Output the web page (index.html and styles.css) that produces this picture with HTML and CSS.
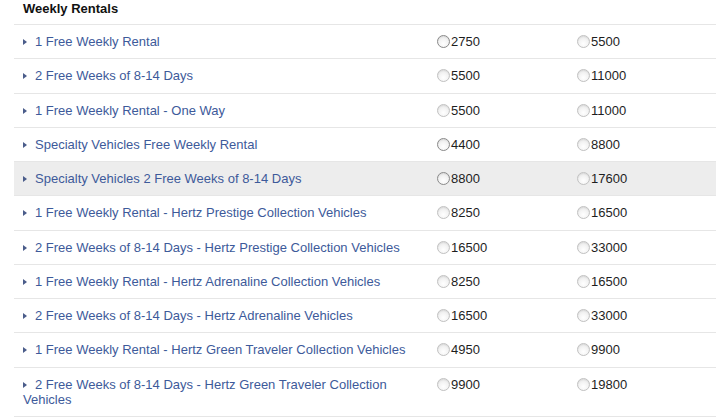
FILE: index.html
```html
<!DOCTYPE html>
<html>
<head>
<meta charset="utf-8">
<link rel="stylesheet" href="styles.css">
</head>
<body>
<div class="panel">
  <h2 class="title">Weekly Rentals</h2>
  <table class="rentals">
    <colgroup><col class="c-name"><col class="c-a"><col class="c-b"></colgroup>
    <tbody>
      <tr><td class="name"><span class="tri"></span>1 Free Weekly Rental</td><td><label class="opt"><span class="radio dark"></span>2750</label></td><td><label class="opt"><span class="radio"></span>5500</label></td></tr>
      <tr><td class="name"><span class="tri"></span>2 Free Weeks of 8-14 Days</td><td><label class="opt"><span class="radio"></span>5500</label></td><td><label class="opt"><span class="radio"></span>11000</label></td></tr>
      <tr><td class="name"><span class="tri"></span>1 Free Weekly Rental - One Way</td><td><label class="opt"><span class="radio"></span>5500</label></td><td><label class="opt"><span class="radio"></span>11000</label></td></tr>
      <tr><td class="name"><span class="tri"></span>Specialty Vehicles Free Weekly Rental</td><td><label class="opt"><span class="radio dark"></span>4400</label></td><td><label class="opt"><span class="radio"></span>8800</label></td></tr>
      <tr class="hl"><td class="name"><span class="tri"></span>Specialty Vehicles 2 Free Weeks of 8-14 Days</td><td><label class="opt"><span class="radio dark"></span>8800</label></td><td><label class="opt"><span class="radio"></span>17600</label></td></tr>
      <tr><td class="name"><span class="tri"></span>1 Free Weekly Rental - Hertz Prestige Collection Vehicles</td><td><label class="opt"><span class="radio"></span>8250</label></td><td><label class="opt"><span class="radio"></span>16500</label></td></tr>
      <tr><td class="name"><span class="tri"></span>2 Free Weeks of 8-14 Days - Hertz Prestige Collection Vehicles</td><td><label class="opt"><span class="radio"></span>16500</label></td><td><label class="opt"><span class="radio"></span>33000</label></td></tr>
      <tr><td class="name"><span class="tri"></span>1 Free Weekly Rental - Hertz Adrenaline Collection Vehicles</td><td><label class="opt"><span class="radio"></span>8250</label></td><td><label class="opt"><span class="radio"></span>16500</label></td></tr>
      <tr><td class="name"><span class="tri"></span>2 Free Weeks of 8-14 Days - Hertz Adrenaline Vehicles</td><td><label class="opt"><span class="radio"></span>16500</label></td><td><label class="opt"><span class="radio"></span>33000</label></td></tr>
      <tr><td class="name"><span class="tri"></span>1 Free Weekly Rental - Hertz Green Traveler Collection Vehicles</td><td><label class="opt"><span class="radio"></span>4950</label></td><td><label class="opt"><span class="radio"></span>9900</label></td></tr>
      <tr><td class="name"><span class="tri"></span>2 Free Weeks of 8-14 Days - Hertz Green Traveler Collection Vehicles</td><td><label class="opt"><span class="radio"></span>9900</label></td><td><label class="opt"><span class="radio"></span>19800</label></td></tr>
    </tbody>
  </table>
</div>
</body>
</html>
```
FILE: styles.css
```css
html, body {
  margin: 0;
  padding: 0;
  background: #fff;
}
body {
  font-family: "Liberation Sans", Arial, Helvetica, sans-serif;
  font-size: 13px;
  line-height: 15px;
  color: #222;
}
.panel {
  margin-left: 14px;
  width: 702px;
}
.title {
  margin: 0;
  padding: 1px 9px 0;
  height: 23px;
  font-size: 13px;
  line-height: 15px;
  font-weight: bold;
  color: #111;
  border-bottom: 1px solid #e6e6e6;
}
.rentals {
  width: 702px;
  border-collapse: collapse;
  table-layout: fixed;
}
.c-name { width: 414px; }
.c-a { width: 140px; }
.c-b { width: 148px; }
.rentals td {
  padding: 9px 9px 9.25px;
  border-bottom: 1px solid #e6e6e6;
  vertical-align: top;
  line-height: 15px;
}
.rentals td.name {
  color: #3d5a9a;
  padding-right: 12px;
}
.rentals tr.hl td {
  background: #ededed;
}
.tri {
  display: inline-block;
  width: 0;
  height: 0;
  border-left: 4px solid #4a5c8a;
  border-top: 3px solid transparent;
  border-bottom: 3px solid transparent;
  margin-right: 8px;
  vertical-align: 1px;
}
.opt {
  display: flex;
  align-items: center;
  height: 15px;
  color: #1e1e1e;
}
.radio {
  display: block;
  flex: none;
  box-sizing: border-box;
  width: 13px;
  height: 13px;
  border-radius: 50%;
  border: 1px solid #c2c2c2;
  background: radial-gradient(circle at 50% 70%, #ffffff 0%, #f4f4f4 45%, #e0e0e0 100%);
  margin-right: 1px;
  box-shadow: inset 0 1px 1px rgba(0,0,0,0.06);
}
.radio.dark {
  border-color: #8a8a8a;
}
```
